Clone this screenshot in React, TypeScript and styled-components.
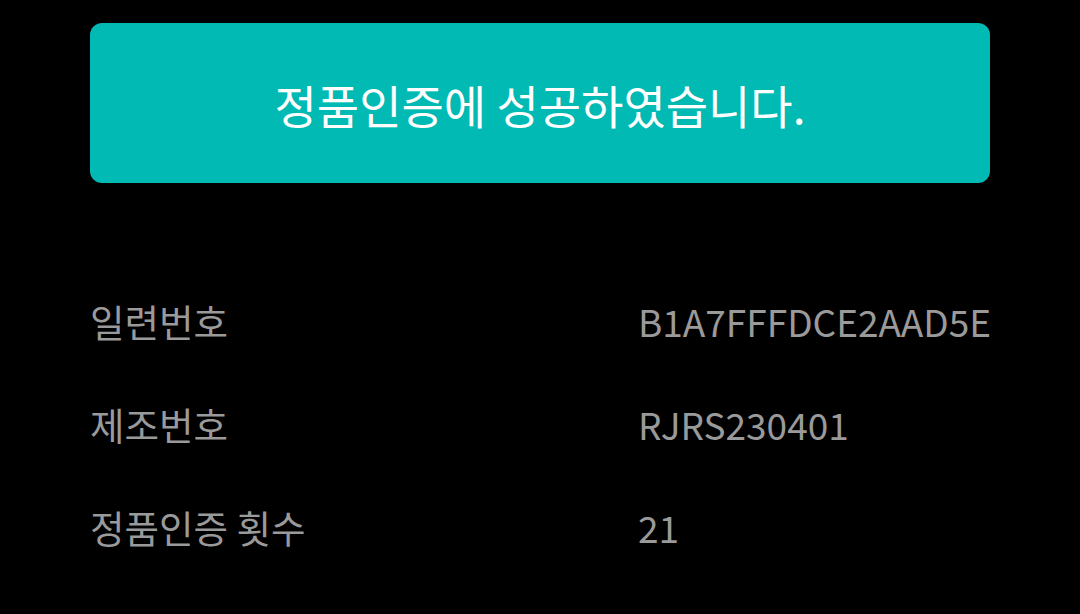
import React from "react";
import styled, { createGlobalStyle } from "styled-components";

const GlobalStyle = createGlobalStyle`
  html, body {
    margin: 0;
    padding: 0;
    background: #000;
  }
  body {
    font-family: "Noto Sans CJK KR", "Noto Sans", sans-serif;
  }
`;

const Page = styled.div`
  width: 1080px;
  height: 614px;
  background: #000;
  padding: 23px 90px 0;
  box-sizing: border-box;
`;

const Banner = styled.div`
  height: 160px;
  border-radius: 12px;
  background: #00bab3;
  display: flex;
  justify-content: center;
  align-items: center;
  color: #fff;
  font-size: 46px;
  padding-top: 2px;
  box-sizing: border-box;
`;

const InfoList = styled.dl`
  margin: 86px 0 0;
  display: grid;
  grid-template-columns: 548px 1fr;
`;

const Label = styled.dt`
  height: 103px;
  display: flex;
  align-items: center;
  color: #9a9a9a;
  font-size: 37.5px;
`;

const Value = styled.dd`
  margin: 0;
  height: 103px;
  display: flex;
  align-items: center;
  color: #9a9a9a;
  font-size: 37px;
`;

const rows = [
  { label: "일련번호", value: "B1A7FFFDCE2AAD5E" },
  { label: "제조번호", value: "RJRS230401" },
  { label: "정품인증 횟수", value: "21" },
];

export default function App() {
  return (
    <>
      <GlobalStyle />
      <Page>
        <Banner>정품인증에 성공하였습니다.</Banner>
        <InfoList>
          {rows.map((r) => (
            <React.Fragment key={r.label}>
              <Label>{r.label}</Label>
              <Value>{r.value}</Value>
            </React.Fragment>
          ))}
        </InfoList>
      </Page>
    </>
  );
}
